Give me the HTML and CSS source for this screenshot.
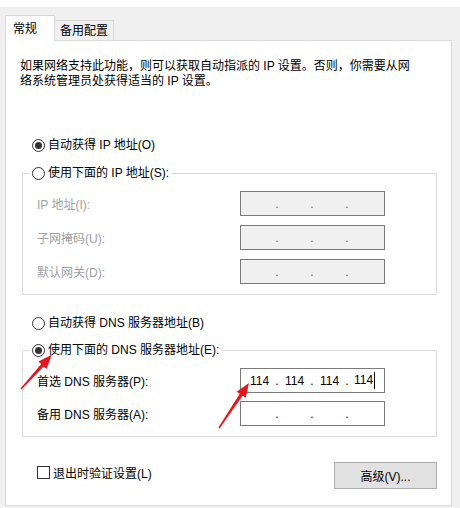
FILE: index.html
```html
<!DOCTYPE html>
<html lang="zh-CN">
<head>
  <meta charset="UTF-8" />
  <title>Internet 协议版本 4 (TCP/IPv4) 属性</title>
  <link rel="stylesheet" href="styles.css">
</head>
<body>
  <div class="window">
    <div class="top-strip"></div>
    <div class="tabs">
      <div class="tab active">常规</div>
      <div class="tab">备用配置</div>
    </div>

    <div class="panel">
      <p class="desc">如果网络支持此功能，则可以获取自动指派的 IP 设置。否则，你需要从网<br>络系统管理员处获得适当的 IP 设置。</p>

      <div class="option first"><span class="radio checked"></span>自动获得 IP 地址(O)</div>
      <fieldset class="group">
        <legend class="option"><span class="radio"></span>使用下面的 IP 地址(S):</legend>
        <div class="field disabled">
          <label>IP 地址(I):</label>
          <div class="ip"><span class="oct"></span><span class="dot">.</span><span class="oct"></span><span class="dot">.</span><span class="oct"></span><span class="dot">.</span><span class="oct"></span></div>
        </div>
        <div class="field disabled">
          <label>子网掩码(U):</label>
          <div class="ip"><span class="oct"></span><span class="dot">.</span><span class="oct"></span><span class="dot">.</span><span class="oct"></span><span class="dot">.</span><span class="oct"></span></div>
        </div>
        <div class="field disabled">
          <label>默认网关(D):</label>
          <div class="ip"><span class="oct"></span><span class="dot">.</span><span class="oct"></span><span class="dot">.</span><span class="oct"></span><span class="dot">.</span><span class="oct"></span></div>
        </div>
      </fieldset>

      <div class="option dns"><span class="radio"></span>自动获得 DNS 服务器地址(B)</div>
      <fieldset class="group dns-group">
        <legend class="option"><span class="radio checked"></span>使用下面的 DNS 服务器地址(E):</legend>
        <div class="field">
          <label>首选 DNS 服务器(P):</label>
          <div class="ip"><span class="oct">114</span><span class="dot">.</span><span class="oct">114</span><span class="dot">.</span><span class="oct">114</span><span class="dot">.</span><span class="oct">114<span class="caret"></span></span></div>
        </div>
        <div class="field">
          <label>备用 DNS 服务器(A):</label>
          <div class="ip"><span class="oct"></span><span class="dot">.</span><span class="oct"></span><span class="dot">.</span><span class="oct"></span><span class="dot">.</span><span class="oct"></span></div>
        </div>
      </fieldset>

      <div class="footer">
        <div class="check"><span class="box"></span>退出时验证设置(L)</div>
        <button class="btn">高级(V)...</button>
      </div>
    </div>

    <!-- red hint arrows drawn over the dialog -->
    <svg class="arrows" width="460" height="508" viewBox="0 0 460 508">
      <polygon transform="translate(21 389) rotate(-47.9)" points="0,-0.7 32,-1.7 32,-5.5 46,0 32,5.5 32,1.7 0,0.7" fill="#e8141c"/>
      <polygon transform="translate(219 428) rotate(-56.3)" points="0,-0.7 40,-1.7 40,-5.5 54,0 40,5.5 40,1.7 0,0.7" fill="#e8141c"/>
    </svg>
  </div>
</body>
</html>
```

FILE: styles.css
```css
body {
  margin: 0;
  font-family: "Liberation Sans", "Noto Sans CJK SC", sans-serif;
  font-size: 12px;
  color: #000;
  background: #f0f0f0;
}
.window {
  position: relative;
  width: 460px;
  height: 508px;
  padding: 0 8px 0 5px;
  box-sizing: border-box;
  overflow: hidden;
}
.top-strip {
  height: 7px;
  margin: 0 -8px 0 -5px;
  background: #fff;
}

/* Tabs */
.tabs {
  display: flex;
  align-items: flex-end;
  height: 33px;
}
.tab {
  height: 20px;
  line-height: 20px;
  padding: 0 5px;
  border: 1px solid #d9d9d9;
  border-left: none;
  border-bottom: none;
  box-sizing: border-box;
  background: #f0f0f0;
}
.tab.active {
  position: relative;
  z-index: 1;
  width: 50px;
  height: 26px;
  line-height: 26px;
  padding: 0 7px;
  margin-bottom: -1px;
  border-left: 1px solid #d9d9d9;
  background: #fff;
}

/* Main panel */
.panel {
  background: #fff;
  border: 1px solid #d9d9d9;
  padding: 0 14px 16px 16px;
}
.desc {
  margin: 18px 0 0 -2px;
  line-height: 15px;
}
.option {
  display: flex;
  align-items: center;
  height: 16px;
  line-height: 16px;
  padding-left: 10px;
  white-space: nowrap;
}
.option.first {
  margin-top: 48px;
}
.option.dns {
  margin-top: 20px;
}
.radio {
  width: 13px;
  height: 13px;
  margin-right: 3px;
  border: 1px solid #333;
  border-radius: 50%;
  box-sizing: border-box;
  background: #fff;
  display: inline-flex;
  align-items: center;
  justify-content: center;
}
.radio.checked::after {
  content: "";
  width: 7px;
  height: 7px;
  border-radius: 50%;
  background: #333;
}

/* Group boxes */
.group {
  margin: 12px 0 0 0;
  padding: 10px 14px 10px 14px;
  border: 1px solid #dcdcdc;
  min-width: 0;
}
.group legend.option {
  padding: 0 2px;
  margin-left: -7px;
  background: #fff;
}
.dns-group {
  margin-top: 11px;
}
.field {
  display: grid;
  grid-template-columns: 203px 145px;
  align-items: center;
  height: 25px;
}
.field + .field {
  margin-top: 9px;
}
.dns-group .field + .field {
  margin-top: 8px;
}
.field.disabled label {
  color: #a0a0a0;
}
.ip {
  display: flex;
  align-items: center;
  height: 25px;
  padding-left: 4px;
  border: 1px solid #7a7a7a;
  box-sizing: border-box;
  background: #fff;
}
.field.disabled .ip {
  background: #f0f0f0;
}
.oct {
  width: 29px;
  text-align: center;
  white-space: nowrap;
}
.dot {
  width: 6px;
  text-align: center;
}
.field.disabled .dot {
  color: #6d6d6d;
}
.caret {
  display: inline-block;
  width: 1px;
  height: 17px;
  margin-left: 1px;
  background: #000;
  vertical-align: middle;
}

/* Footer */
.footer {
  display: flex;
  justify-content: space-between;
  align-items: flex-start;
  margin-top: 25px;
  padding-left: 15px;
}
.check {
  display: flex;
  align-items: center;
  height: 16px;
  margin-top: 2px;
}
.box {
  width: 13px;
  height: 13px;
  margin-right: 3px;
  border: 1px solid #333;
  box-sizing: border-box;
  background: #fff;
}
.btn {
  width: 103px;
  height: 27px;
  font: inherit;
  color: #000;
  background: #e1e1e1;
  border: 1px solid #adadad;
  padding: 0;
}

.arrows {
  position: absolute;
  top: 0;
  left: 0;
  pointer-events: none;
}
```
